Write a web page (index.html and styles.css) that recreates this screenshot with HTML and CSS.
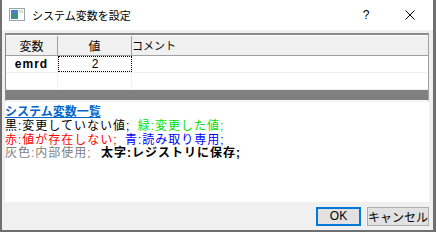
FILE: index.html
```html
<!DOCTYPE html>
<html lang="ja">
<head>
    <meta charset="UTF-8">
    <title>システム変数を設定</title>
    <link rel="stylesheet" href="styles.css">
</head>
<body>
    <div class="window">
        <div class="titlebar">
            <svg class="app-icon" viewBox="0 0 16 16">
                <rect x="0.5" y="1.5" width="15" height="12" fill="#fff" stroke="#9aa5a5"/>
                <rect x="2" y="3" width="7" height="9" fill="#3d8f8a"/>
                <rect x="2" y="3" width="7" height="4" fill="#4a7fc0"/>
                <rect x="10" y="3" width="4" height="3" fill="#cfe3d8"/>
            </svg>
            <div class="title">システム変数を設定</div>
            <div class="title-btn help">?</div>
            <div class="title-btn close">
                <svg viewBox="0 0 10 10" width="10" height="10">
                    <path d="M0.5 0.5L9.5 9.5M9.5 0.5L0.5 9.5" stroke="#000" stroke-width="1"/>
                </svg>
            </div>
        </div>

        <div class="content">
            <div class="grid">
                <div class="grid-row grid-head">
                    <div class="cell c-name">変数</div>
                    <div class="cell c-value">値</div>
                    <div class="cell c-comment">コメント</div>
                </div>
                <div class="grid-row">
                    <div class="cell c-name bold">emrd</div>
                    <div class="cell c-value focus">2</div>
                    <div class="cell c-comment"></div>
                </div>
                <div class="grid-row">
                    <div class="cell c-name"></div>
                    <div class="cell c-value"></div>
                    <div class="cell c-comment"></div>
                </div>
                <div class="grid-bar"></div>
            </div>

            <div class="info">
                <a class="info-title">システム変数一覧</a>
                <div class="info-line">
                    <span class="k-black">黒:変更していない値;</span>
                    <span class="k-green">緑:変更した値;</span>
                </div>
                <div class="info-line">
                    <span class="k-red">赤:値が存在しない;</span>
                    <span class="k-blue">青:読み取り専用;</span>
                </div>
                <div class="info-line">
                    <span class="k-gray">灰色:内部使用;</span>
                    <span class="k-bold">太字:レジストリに保存;</span>
                </div>
            </div>

            <div class="buttons">
                <button class="btn default">OK</button>
                <button class="btn">キャンセル</button>
            </div>
        </div>
    </div>
</body>
</html>
```

FILE: styles.css
```css
body {
    margin: 0;
    font-family: "Noto Sans CJK JP", "Noto Sans", sans-serif;
    font-size: 12px;
    color: #000;
}
.window {
    width: 436px;
    height: 232px;
    box-sizing: border-box;
    border-style: solid;
    border-color: #707070;
    border-width: 0 3px 2px 2px;
    background-color: #f0f0f0;
    display: flex;
    flex-direction: column;
}
.titlebar {
    height: 30px;
    flex-shrink: 0;
    background-color: #fff;
    display: flex;
    align-items: center;
}
.app-icon {
    width: 16px;
    height: 16px;
    margin: 0 7px 0 7px;
}
.title {
    flex-grow: 1;
    font-size: 11px;
    line-height: 14px;
}
.title-btn {
    display: flex;
    align-items: center;
    justify-content: center;
    width: 46px;
    height: 30px;
}
.help {
    font-family: "Liberation Sans", sans-serif;
    font-size: 12px;
    margin-right: -2px;
}
.content {
    flex-grow: 1;
    padding: 3px 4px 0 3px;
    display: flex;
    flex-direction: column;
}
.grid {
    border-top: 2px solid #8a8a8a;
    border-left: 1px solid #8a8a8a;
    border-right: 1px solid #a0a0a0;
    border-bottom: 1px solid #f8f8f8;
    background-color: #fff;
}
.grid-row {
    display: flex;
    height: 16px;
    border-bottom: 1px solid #f0f0f0;
}
.grid-head {
    height: 19px;
    background-color: #f0f0f0;
    border-top: 1px solid #fff;
    border-bottom: 1px solid #a0a0a0;
}
.cell {
    box-sizing: border-box;
    line-height: 16px;
    font-size: 11px;
    border-right: 1px solid #f0f0f0;
    white-space: nowrap;
}
.grid-head .cell {
    line-height: 19px;
    font-size: 12px;
    border-right: 1px solid #a0a0a0;
}
.c-name {
    width: 52px;
    text-align: center;
}
.c-value {
    width: 74px;
    text-align: center;
}
.c-comment {
    flex-grow: 1;
    border-right: none;
}
.grid-head .c-comment {
    border-right: none;
    font-size: 11px;
}
.bold {
    font-family: "Liberation Sans", sans-serif;
    font-weight: bold;
    font-size: 12px;
    letter-spacing: 1px;
}
.focus {
    border: 1px dotted #000;
    font-family: "Liberation Sans", sans-serif;
    font-size: 12px;
    line-height: 14px;
}
.grid-bar {
    height: 10px;
    background-color: #808080;
}
.info {
    margin-top: 1px;
    height: 100px;
    background-color: #fff;
    padding: 3px 0 0 0;
    box-sizing: border-box;
    font-family: "Liberation Sans", "Noto Sans CJK JP", sans-serif;
}
.info-title {
    display: block;
    color: #0066cc;
    font-weight: bold;
    text-decoration: underline;
    line-height: 14px;
    height: 14px;
}
.info-line {
    height: 13.5px;
    white-space: nowrap;
    letter-spacing: 1px;
}
.info-line span {
    display: inline-block;
    line-height: 13.5px;
    height: 13.5px;
}
.k-black { color: #000; }
.k-green { color: #00e000; margin-left: 3px; }
.k-red { color: #ff0000; }
.k-blue { color: #0000ff; margin-left: 3px; }
.k-gray { color: #808080; }
.k-bold { font-weight: bold; margin-left: 5px; }
.buttons {
    display: flex;
    justify-content: flex-end;
    gap: 6px;
    margin-top: 5px;
}
.btn {
    height: 19px;
    padding: 0;
    background-color: #e1e1e1;
    border: 1px solid #adadad;
    font-family: "Noto Sans CJK JP", sans-serif;
    font-size: 12px;
    line-height: 15px;
    color: #000;
    width: 62px;
}
.btn.default {
    width: 45px;
    border: 2px solid #0078d7;
    font-family: "Liberation Sans", sans-serif;
}
```
